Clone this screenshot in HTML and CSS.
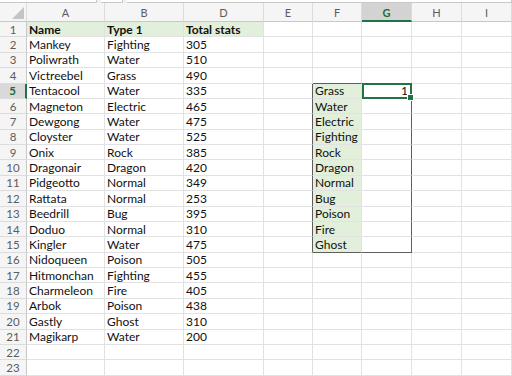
FILE: index.html
```html
<!DOCTYPE html>
<html>
<head>
<meta charset="utf-8">
<link rel="stylesheet" href="styles.css">
</head>
<body>
<div class="topbar">
  <div class="tb tb-name"></div>
  <div class="tb tb-mid"></div>
  <div class="tb tb-formula"></div>
</div>
<div class="sheet">
  <div class="h corner"><svg width="12" height="12" viewBox="0 0 12 12"><polygon points="12,0 12,12 0,12" fill="#c4c4c4"/></svg></div>
  <div class="h col">A</div><div class="h col">B</div><div class="h col">D</div><div class="h col">E</div><div class="h col">F</div><div class="h col col-sel">G</div><div class="h col">H</div><div class="h col">I</div>

  <div class="h rn">1</div><div class="c hd b">Name</div><div class="c hd b">Type 1</div><div class="c hd b">Total stats</div><div class="c"></div><div class="c"></div><div class="c"></div><div class="c"></div><div class="c"></div>
  <div class="h rn">2</div><div class="c">Mankey</div><div class="c">Fighting</div><div class="c">305</div><div class="c"></div><div class="c"></div><div class="c"></div><div class="c"></div><div class="c"></div>
  <div class="h rn">3</div><div class="c">Poliwrath</div><div class="c">Water</div><div class="c">510</div><div class="c"></div><div class="c"></div><div class="c"></div><div class="c"></div><div class="c"></div>
  <div class="h rn">4</div><div class="c">Victreebel</div><div class="c">Grass</div><div class="c">490</div><div class="c"></div><div class="c r-top"></div><div class="c r-top"></div><div class="c"></div><div class="c"></div>
  <div class="h rn rn-sel">5</div><div class="c">Tentacool</div><div class="c">Water</div><div class="c">335</div><div class="c r-left"></div><div class="c lst">Grass</div><div class="c num r-right active">1</div><div class="c"></div><div class="c"></div>
  <div class="h rn">6</div><div class="c">Magneton</div><div class="c">Electric</div><div class="c">465</div><div class="c r-left"></div><div class="c lst">Water</div><div class="c r-right"></div><div class="c"></div><div class="c"></div>
  <div class="h rn">7</div><div class="c">Dewgong</div><div class="c">Water</div><div class="c">475</div><div class="c r-left"></div><div class="c lst">Electric</div><div class="c r-right"></div><div class="c"></div><div class="c"></div>
  <div class="h rn">8</div><div class="c">Cloyster</div><div class="c">Water</div><div class="c">525</div><div class="c r-left"></div><div class="c lst">Fighting</div><div class="c r-right"></div><div class="c"></div><div class="c"></div>
  <div class="h rn">9</div><div class="c">Onix</div><div class="c">Rock</div><div class="c">385</div><div class="c r-left"></div><div class="c lst">Rock</div><div class="c r-right"></div><div class="c"></div><div class="c"></div>
  <div class="h rn">10</div><div class="c">Dragonair</div><div class="c">Dragon</div><div class="c">420</div><div class="c r-left"></div><div class="c lst">Dragon</div><div class="c r-right"></div><div class="c"></div><div class="c"></div>
  <div class="h rn">11</div><div class="c">Pidgeotto</div><div class="c">Normal</div><div class="c">349</div><div class="c r-left"></div><div class="c lst">Normal</div><div class="c r-right"></div><div class="c"></div><div class="c"></div>
  <div class="h rn">12</div><div class="c">Rattata</div><div class="c">Normal</div><div class="c">253</div><div class="c r-left"></div><div class="c lst">Bug</div><div class="c r-right"></div><div class="c"></div><div class="c"></div>
  <div class="h rn">13</div><div class="c">Beedrill</div><div class="c">Bug</div><div class="c">395</div><div class="c r-left"></div><div class="c lst">Poison</div><div class="c r-right"></div><div class="c"></div><div class="c"></div>
  <div class="h rn">14</div><div class="c">Doduo</div><div class="c">Normal</div><div class="c">310</div><div class="c r-left"></div><div class="c lst">Fire</div><div class="c r-right"></div><div class="c"></div><div class="c"></div>
  <div class="h rn">15</div><div class="c">Kingler</div><div class="c">Water</div><div class="c">475</div><div class="c r-left"></div><div class="c lst r-bottom">Ghost</div><div class="c r-right r-bottom"></div><div class="c"></div><div class="c"></div>
  <div class="h rn">16</div><div class="c">Nidoqueen</div><div class="c">Poison</div><div class="c">505</div><div class="c"></div><div class="c"></div><div class="c"></div><div class="c"></div><div class="c"></div>
  <div class="h rn">17</div><div class="c">Hitmonchan</div><div class="c">Fighting</div><div class="c">455</div><div class="c"></div><div class="c"></div><div class="c"></div><div class="c"></div><div class="c"></div>
  <div class="h rn">18</div><div class="c">Charmeleon</div><div class="c">Fire</div><div class="c">405</div><div class="c"></div><div class="c"></div><div class="c"></div><div class="c"></div><div class="c"></div>
  <div class="h rn">19</div><div class="c">Arbok</div><div class="c">Poison</div><div class="c">438</div><div class="c"></div><div class="c"></div><div class="c"></div><div class="c"></div><div class="c"></div>
  <div class="h rn">20</div><div class="c">Gastly</div><div class="c">Ghost</div><div class="c">310</div><div class="c"></div><div class="c"></div><div class="c"></div><div class="c"></div><div class="c"></div>
  <div class="h rn">21</div><div class="c">Magikarp</div><div class="c">Water</div><div class="c">200</div><div class="c"></div><div class="c"></div><div class="c"></div><div class="c"></div><div class="c"></div>
  <div class="h rn">22</div><div class="c"></div><div class="c"></div><div class="c"></div><div class="c"></div><div class="c"></div><div class="c"></div><div class="c"></div><div class="c"></div>
  <div class="h rn">23</div><div class="c"></div><div class="c"></div><div class="c"></div><div class="c"></div><div class="c"></div><div class="c"></div><div class="c"></div><div class="c"></div>
</div>
</body>
</html>
```

FILE: styles.css
```css
* { box-sizing: border-box; }
html, body { margin: 0; padding: 0; background: #ffffff; overflow: hidden; }
body { width: 512px; height: 376px; font-family: Lato, "Open Sans", sans-serif; }

.topbar {
  height: 3px;
  display: flex;
  gap: 4px;
  background: #efefef;
}
.tb { background: #ffffff; border-bottom: 1px solid #c9c9c9; border-right: 1px solid #c9c9c9; }
.tb-name { width: 97px; }
.tb-mid { width: 22px; }
.tb-formula { flex: 1; }

.sheet {
  display: grid;
  grid-template-columns: 27px 78px 79px 80px 49px 49px 50px 50px 50px;
  grid-template-rows: 19px repeat(23, 15.375px);
  background: #ffffff;
}

.h {
  background: #f5f5f5;
  color: #5c5c5c;
  font-size: 11px;
  display: flex;
  align-items: center;
  justify-content: center;
  border-right: 1px solid #dcdcdc;
  border-bottom: 1px solid #dcdcdc;
}
.corner { justify-content: flex-end; align-items: flex-end; padding: 0 2px 2px 0; border-bottom: 1px solid #c8c8c8; }
.col { border-bottom: 1px solid #c8c8c8; padding-top: 1px; }
.col-sel {
  background: #d3d3d3;
  color: #1e6b3c;
  font-weight: bold;
  border-bottom: 2px solid #217346;
}
.rn { font-size: 11.5px; border-right: 1px solid #c8c8c8; }
.rn-sel {
  background: #d9d9d9;
  color: #1e6b3c;
  font-weight: bold;
  border-right: 2px solid #217346;
}

.c {
  font-size: 12px;
  color: #111111;
  padding-left: 2px;
  display: flex;
  align-items: center;
  white-space: nowrap;
  overflow: hidden;
  border-right: 1px solid #e2e2e2;
  border-bottom: 1px solid #e2e2e2;
}
.hd { background: #e2efda; }
.b { font-weight: bold; }
.lst { background: #e2efda; }
.num { justify-content: flex-end; padding-right: 3px; }

.r-top { border-bottom-color: #5e5e5e; }
.r-left { border-right-color: #5e5e5e; }
.r-right { border-right-color: #5e5e5e; }
.r-bottom { border-bottom-color: #5e5e5e; }

.active { position: relative; overflow: visible; }
.active::after {
  content: "";
  position: absolute;
  top: -1px;
  left: 0;
  right: -1px;
  bottom: -1px;
  border: 2px solid #217346;
}
.active::before {
  content: "";
  position: absolute;
  right: -3px;
  bottom: -3px;
  width: 5px;
  height: 5px;
  background: #217346;
  border: 1px solid #ffffff;
  z-index: 2;
}
```
